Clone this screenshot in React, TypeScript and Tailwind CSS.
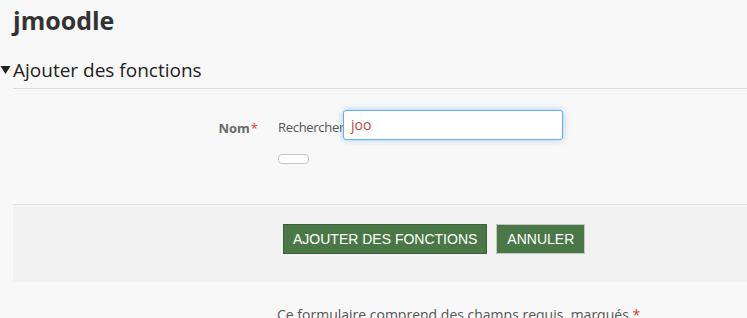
export default function App() {
  return (
    <div className="w-[747px] h-[318px] overflow-hidden bg-[#f8f8f8] font-['Open_Sans',sans-serif] text-[#373a3c]">
      <h1 className="pl-[13px] pt-[2px] h-[50px] text-[25px] font-bold leading-[36px] text-[#333]">jmoodle</h1>

      <div className="flex items-center h-[38px] pt-[1px]">
        <span className="w-[13px] flex justify-start">
          <svg width="11" height="10" viewBox="0 0 11 10">
            <path d="M0.5 1 L10.5 1 L5.5 9 Z" fill="#222" />
          </svg>
        </span>
        <span className="text-[19px] leading-[28px] text-[#222]">Ajouter des fonctions</span>
      </div>

      <div className="ml-[13px] border-t border-[#dedede]" />

      <div className="flex pt-[21px]">
        <div className="w-[265px] flex justify-end pr-[7px] pt-[8px] h-[30px]">
          <span className="text-[13px] font-bold text-[#6a6a6a] leading-[20px]">Nom</span>
          <span className="text-[13px] text-[#e0383b] leading-[20px] ml-[1px]">*</span>
        </div>
        <div className="flex flex-col ml-[13px]">
          <div className="flex items-center h-[30px]">
            <span className="w-[65px] text-[13px] text-[#555] pt-[6px] tracking-[-0.3px] whitespace-nowrap overflow-visible">Rechercher</span>
            <div className="w-[220px] h-[30px] bg-white border border-[#66afe9] rounded-[3px] shadow-[0_0_6px_rgba(102,175,233,0.6)] flex items-center px-[7px]">
              <span className="text-[14px] text-[#b94a48] leading-[20px]">joo</span>
            </div>
          </div>
          <div className="mt-[14px] w-[31px] h-[10px] rounded-[4px] border border-[#c8c8c8] bg-white" />
        </div>
      </div>

      <div className="mt-[40px] ml-[13px] h-[78px] bg-[#f2f2f2] border-t border-[#e3e3e3] flex items-start pt-[19px] pl-[270px] gap-[9px] font-['Liberation_Sans',sans-serif]">
        <button className="h-[30px] px-[9px] bg-[#4a7746] border border-[#3b5f38] text-white text-[14px] leading-[28px]">
          AJOUTER DES FONCTIONS
        </button>
        <button className="h-[30px] px-[10px] bg-[#4a7746] border border-[#c4c4c4] text-white text-[14px] leading-[28px]">
          ANNULER
        </button>
      </div>

      <div className="pl-[277px] pt-[23px] text-[14px] text-[#555] leading-[20px] whitespace-nowrap">
        Ce formulaire comprend des champs requis, marqués <span className="text-[#e0383b]">*</span>
      </div>
    </div>
  );
}
